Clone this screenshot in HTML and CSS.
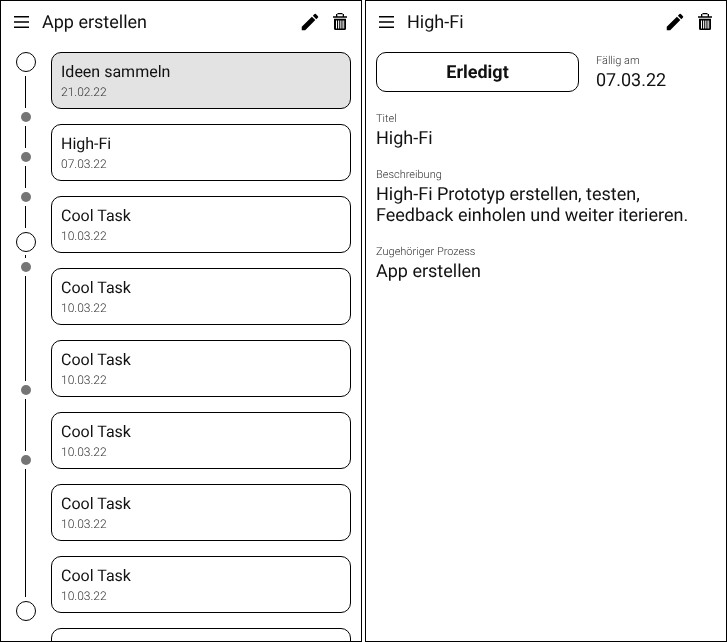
FILE: index.html
```html
<!DOCTYPE html>
<html lang="de">
<head>
    <meta charset="UTF-8">
    <title>App erstellen</title>
    <link rel="stylesheet" href="styles.css">
</head>
<body>
    <svg class="icon-defs" width="0" height="0">
        <symbol id="icon-menu" viewBox="0 0 15 12"><path d="M0 0h15v1.500H0zM0 5.300h15v1.500H0zM0 10.500h15V12H0z"/></symbol>
        <symbol id="icon-edit" viewBox="0 0 24 24"><path d="M3 17.25V21h3.75L17.81 9.94l-3.75-3.75L3 17.25zM20.71 7.04a1 1 0 0 0 0-1.41l-2.34-2.34a1 1 0 0 0-1.41 0l-1.83 1.83 3.75 3.75 1.83-1.83z"/></symbol>
        <symbol id="icon-trash" viewBox="0 0 14 17"><path fill-rule="evenodd" d="M4.500 0h5v1H11v2.200h3v1.600H0V3.200h3V1h1.500zM4.300 1.200v2h5.400v-2zM1 5.800h12V15.500a1.500 1.500 0 0 1-1.500 1.500h-9A1.500 1.500 0 0 1 1 15.500zM3 7.500v8h1v-8zM5 7.500v8h.900v-8zM6.800 7.500v8h.900v-8zM8.600 7.500v8h.900v-8zM10.300 7.500v8h.900v-8z"/></symbol>
    </svg>

    <div class="screens">
        <section class="screen">
            <header class="topbar">
                <svg class="icon-menu"><use href="#icon-menu"/></svg>
                <h1>App erstellen</h1>
                <svg class="icon-edit"><use href="#icon-edit"/></svg>
                <svg class="icon-trash"><use href="#icon-trash"/></svg>
            </header>
            <div class="plan">
                <div class="timeline">
                    <span class="milestone"></span>
                    <span class="line line-first"></span>
                    <span class="step"></span>
                    <span class="line line-22"></span>
                    <span class="step"></span>
                    <span class="line line-22"></span>
                    <span class="step"></span>
                    <span class="line line-22 line-end"></span>
                    <span class="milestone"></span>
                    <span class="line line-3"></span>
                    <span class="step"></span>
                    <span class="line line-105"></span>
                    <span class="step"></span>
                    <span class="line line-52"></span>
                    <span class="step"></span>
                    <span class="line line-128 line-end"></span>
                    <span class="milestone"></span>
                </div>
                <div class="tasks">
                    <div class="task task-active"><div class="task-title">Ideen sammeln</div><div class="task-date">21.02.22</div></div>
                    <div class="task"><div class="task-title">High-Fi</div><div class="task-date">07.03.22</div></div>
                    <div class="task"><div class="task-title">Cool Task</div><div class="task-date">10.03.22</div></div>
                    <div class="task"><div class="task-title">Cool Task</div><div class="task-date">10.03.22</div></div>
                    <div class="task"><div class="task-title">Cool Task</div><div class="task-date">10.03.22</div></div>
                    <div class="task"><div class="task-title">Cool Task</div><div class="task-date">10.03.22</div></div>
                    <div class="task"><div class="task-title">Cool Task</div><div class="task-date">10.03.22</div></div>
                    <div class="task"><div class="task-title">Cool Task</div><div class="task-date">10.03.22</div></div>
                    <div class="task"></div>
                </div>
            </div>
        </section>

        <section class="screen">
            <header class="topbar">
                <svg class="icon-menu"><use href="#icon-menu"/></svg>
                <h1>High-Fi</h1>
                <svg class="icon-edit"><use href="#icon-edit"/></svg>
                <svg class="icon-trash"><use href="#icon-trash"/></svg>
            </header>
            <div class="detail">
                <div class="status-row">
                    <button class="done-button">Erledigt</button>
                    <div class="due">
                        <div class="label">Fällig am</div>
                        <div class="value">07.03.22</div>
                    </div>
                </div>
                <div class="field">
                    <div class="label">Titel</div>
                    <div class="value">High-Fi</div>
                </div>
                <div class="field">
                    <div class="label">Beschreibung</div>
                    <div class="value">High-Fi Prototyp erstellen, testen,<br>Feedback einholen und weiter iterieren.</div>
                </div>
                <div class="field">
                    <div class="label">Zugehöriger Prozess</div>
                    <div class="value">App erstellen</div>
                </div>
            </div>
        </section>
    </div>
</body>
</html>
```

FILE: styles.css
```css
* {
    box-sizing: border-box;
    font-family: Roboto, 'Liberation Sans', sans-serif;
    text-rendering: geometricPrecision;
}

html, body {
    margin: 0;
    padding: 0;
    height: 100%;
    background: #fff;
    overflow: hidden;
}

.icon-defs {
    display: block;
    height: 0;
}

.screens {
    display: flex;
    justify-content: space-between;
    width: 727px;
    height: 642px;
    will-change: transform;
}

.screen {
    width: 362px;
    height: 642px;
    border: 1px solid #000;
    overflow: hidden;
}

.topbar {
    display: flex;
    align-items: center;
    height: 42px;
    padding: 0 14px 0 13px;
    color: #000;
}

.topbar h1 {
    flex: 1;
    margin: 0 0 0 13px;
    font-size: 18px;
    font-weight: 400;
    color: #111;
}

.icon-menu {
    flex: none;
    width: 15px;
    height: 12px;
    margin-bottom: 1px;
}

.icon-edit {
    flex: none;
    width: 22px;
    height: 22px;
    margin: 0 12px 1px 0;
}

.icon-trash {
    flex: none;
    width: 14px;
    height: 17px;
    margin-bottom: 1px;
}

.plan {
    display: flex;
    padding: 9px 10px 0 15px;
}

.timeline {
    display: flex;
    flex-direction: column;
    align-items: center;
    width: 20px;
    margin-right: 15px;
}

.milestone {
    flex: none;
    width: 20px;
    height: 20px;
    border: 1px solid #000;
    border-radius: 50%;
}

.step {
    flex: none;
    width: 10px;
    height: 10px;
    margin: 4px 0;
    border-radius: 50%;
    background: #757575;
}

.line {
    flex: none;
    width: 1px;
    margin-right: 1px;
    background: #000;
}

.line-first { height: 32px; margin-top: 4px; }
.line-3 { height: 3px; margin-top: 3px; }
.line-22 { height: 22px; }
.line-52 { height: 52px; }
.line-105 { height: 105px; }
.line-128 { height: 128px; }
.line-end { margin-bottom: 4px; }

.tasks {
    flex: 1;
    display: flex;
    flex-direction: column;
    gap: 15px;
}

.task {
    flex: none;
    height: 57px;
    padding: 9px 9px 0;
    border: 1px solid #000;
    border-radius: 10px;
}

.task-active {
    background: #e3e3e3;
}

.task-title {
    font-size: 16px;
    line-height: 19px;
    color: #111;
}

.task-date {
    margin-top: 4px;
    font-size: 12px;
    font-weight: 300;
    line-height: 14px;
    color: #333;
}

.detail {
    padding: 9px 10px 0;
}

.status-row {
    display: flex;
    align-items: flex-start;
    gap: 17px;
    margin-bottom: 20px;
}

.done-button {
    width: 203px;
    height: 40px;
    padding: 0;
    background: #fff;
    border: 1px solid #000;
    border-radius: 10px;
    font-size: 18px;
    font-weight: 700;
    color: #111;
}

.due {
    padding-top: 2px;
}

.due .value {
    margin-top: 3px;
}

.label {
    font-size: 11px;
    font-weight: 300;
    line-height: 13px;
    color: #333;
}

.value {
    font-size: 18px;
    line-height: 21px;
    color: #111;
}

.field {
    margin-bottom: 19px;
}

.field .label {
    margin-bottom: 3px;
}
```
